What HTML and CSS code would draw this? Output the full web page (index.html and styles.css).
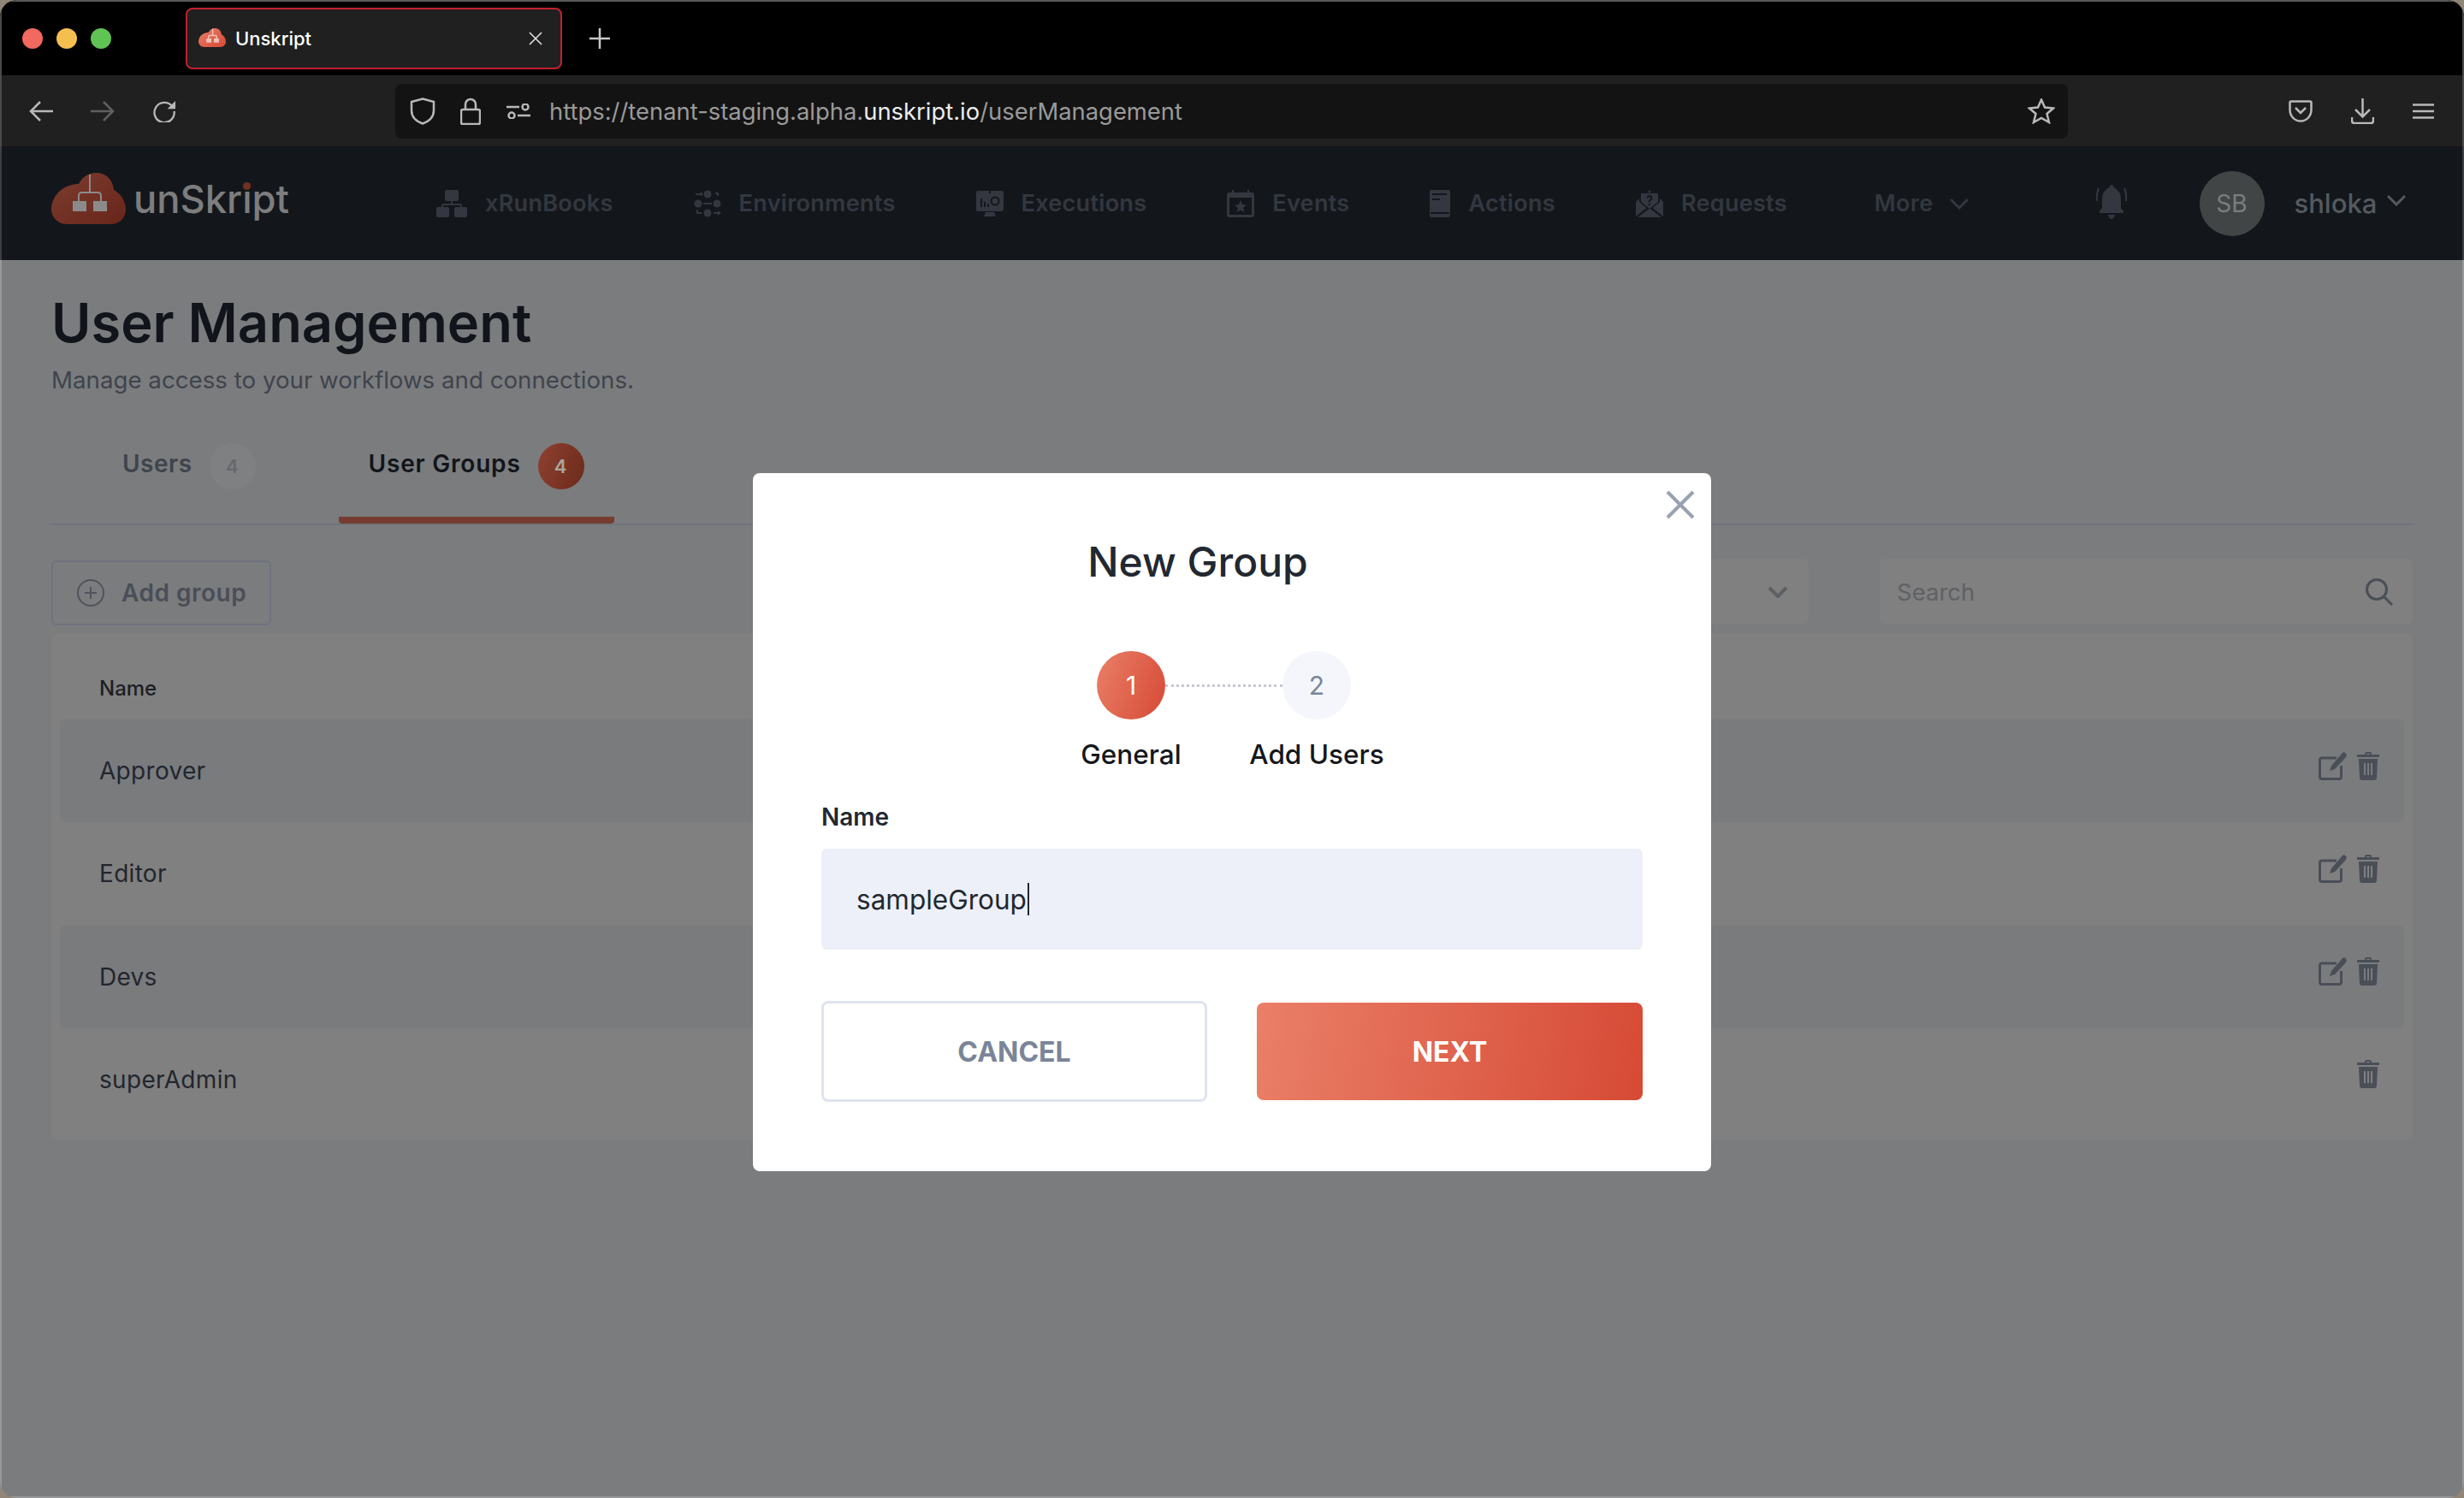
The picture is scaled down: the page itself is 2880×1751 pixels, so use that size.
FILE: index.html
```html
<!DOCTYPE html>
<html lang="en">

<head>
    <meta charset="UTF-8">
    <meta name="viewport" content="width=device-width, initial-scale=1.0">
    <title>User Management</title>
    <link rel="stylesheet" href="styles.css">
</head>

<body>
    <div class="window">
        <!-- browser tabs -->
        <div class="tabstrip">
            <div class="lights">
                <span class="light red"></span>
                <span class="light yellow"></span>
                <span class="light green"></span>
            </div>
            <div class="tab">
                <svg class="favicon" viewBox="0 0 87 60">
                    <defs>
                        <linearGradient id="favGrad" x1="0" y1="0" x2="1" y2="1">
                            <stop offset="0" stop-color="#ea7f68" />
                            <stop offset="1" stop-color="#d64a35" />
                        </linearGradient>
                    </defs>
                    <path fill="url(#favGrad)" d="M18 60C8 60 0 52 0 43C0 30 10 14 32 13C36 5 44 0 52 0C64 0 72 8 73 20C81 24 87 33 87 43C87 52 80 60 70 60Z" />
                    <path fill="none" stroke="#f3c4ba" stroke-width="4" d="M45 2V22M32 33V27Q32 23 36 23H54Q58 23 58 27V33" />
                    <path fill="#f3c4ba" d="M25 33H41V46H25ZM49 33H65V46H49Z" />
                </svg>
                <span class="tab-title">Unskript</span>
                <svg class="tab-close" viewBox="0 0 16 16">
                    <path d="M1 1L15 15M15 1L1 15" />
                </svg>
            </div>
            <svg class="new-tab" viewBox="0 0 24 24">
                <path d="M12 0V24M0 12H24" />
            </svg>
        </div>

        <!-- browser toolbar -->
        <div class="toolbar">
            <svg class="tool-icon" viewBox="0 0 28 24">
                <path d="M28 12H2M13 1L2 12L13 23" />
            </svg>
            <svg class="tool-icon tool-off" viewBox="0 0 28 24">
                <path d="M0 12H26M15 1L26 12L15 23" />
            </svg>
            <svg class="tool-icon" viewBox="0 0 28 28">
                <path d="M24 8A12.5 12.5 0 1 0 26.500 14" />
                <path class="solid" d="M28 1V11H18Z" />
            </svg>
            <div class="urlbar">
                <svg class="url-shield" viewBox="0 0 30 32">
                    <path d="M15 1.500L28 5V15C28 23 22 28 15 30.500C8 28 2 23 2 15V5Z" />
                </svg>
                <svg class="url-lock" viewBox="0 0 24 32">
                    <path d="M6 14V8A6 6 0 0 1 18 8V14M3 14H21Q23 14 23 16V29Q23 31 21 31H3Q1 31 1 29V16Q1 14 3 14Z" />
                </svg>
                <svg class="url-perm" viewBox="0 0 28 18">
                    <path d="M0 4H15M13 14H28" />
                    <circle cx="22" cy="4" r="3.500" />
                    <circle cx="6" cy="14" r="3.500" />
                </svg>
                <span class="url-text">https://tenant-staging.alpha.<b>unskript.io</b>/userManagement</span>
                <svg class="url-star" viewBox="0 0 32 30">
                    <path d="M16 1.500L20 10.500L30 11.500L22.500 18L25 28L16 23L7 28L9.500 18L2 11.500L12 10.500Z" />
                </svg>
            </div>
            <div class="tool-right">
                <svg class="pocket" viewBox="0 0 28 26">
                    <path d="M3 1.500H25Q26.500 1.500 26.500 3V11C26.500 19 21 24.500 14 24.500C7 24.500 1.500 19 1.500 11V3Q1.500 1.500 3 1.500ZM8 9L14 15L20 9" />
                </svg>
                <svg class="download" viewBox="0 0 27 30">
                    <path d="M13.500 0V21M5 13L13.500 21.500L22 13M1 22V26Q1 29 4 29H23Q26 29 26 26V22" />
                </svg>
                <svg class="burger" viewBox="0 0 25 18">
                    <path d="M0 1.500H25M0 9H25M0 16.500H25" />
                </svg>
            </div>
        </div>

        <!-- app nav -->
        <nav class="appnav">
            <div class="brand">
                <svg class="brand-mark" viewBox="0 0 87 60">
                    <defs>
                        <linearGradient id="brandGrad" x1="0" y1="0" x2="1" y2="1">
                            <stop offset="0" stop-color="#7c3c2e" />
                            <stop offset="1" stop-color="#68261a" />
                        </linearGradient>
                    </defs>
                    <path fill="url(#brandGrad)" d="M18 60C8 60 0 52 0 43C0 30 10 14 32 13C36 5 44 0 52 0C64 0 72 8 73 20C81 24 87 33 87 43C87 52 80 60 70 60Z" />
                    <path fill="none" stroke="#8b8b8b" stroke-width="2" d="M45 2V22M32 33V27Q32 23 36 23H54Q58 23 58 27V33" />
                    <path fill="#8b8b8b" d="M25 33H41V45H25ZM49 33H65V45H49Z" />
                </svg>
                <span class="brand-name">unSkr<span class="brand-i">i</span>pt</span>
            </div>
            <ul class="nav-items">
                <li class="nav-item">
                    <svg class="nav-icon" width="36" height="32" viewBox="0 0 36 32">
                        <rect x="10" y="0" width="16" height="13" rx="2" />
                        <rect x="0" y="20" width="15" height="12" rx="2" />
                        <rect x="21" y="20" width="15" height="12" rx="2" />
                        <path class="line" d="M18 13V17M7 20V19Q7 17 9 17H27Q29 17 29 19V20" />
                    </svg>
                    xRunBooks
                </li>
                <li class="nav-item">
                    <svg class="nav-icon" width="32" height="32" viewBox="0 0 32 32">
                        <circle cx="16" cy="5" r="4.500" />
                        <circle cx="5" cy="16" r="4.500" />
                        <circle cx="27" cy="16" r="4.500" />
                        <circle cx="16" cy="27" r="4.500" />
                        <path class="line" d="M11 16H21M2 5H9M25 4H28V7M4 23V27H9M23 27H30" />
                        <path d="M8 2L11 5L8 8ZM28 24L32 27L28 30Z" />
                    </svg>
                    Environments
                </li>
                <li class="nav-item">
                    <svg class="nav-icon" width="32" height="30" viewBox="0 0 32 30">
                        <path d="M2 0H15V3H17V0H30Q32 0 32 2V22Q32 24 30 24H2Q0 24 0 22V2Q0 0 2 0ZM11 25H21L23 30H9Z" />
                        <path class="dark" d="M5 9H7V19H5ZM9 13H11V19H9ZM13 15H15V19H13Z" />
                        <circle class="ring" cx="22" cy="12" r="4.500" />
                    </svg>
                    Executions
                </li>
                <li class="nav-item">
                    <svg class="nav-icon" width="32" height="32" viewBox="0 0 32 32">
                        <path d="M6 0H8V3H24V0H26V3H29Q32 3 32 6V29Q32 32 29 32H3Q0 32 0 29V6Q0 3 3 3H6ZM3 9V29H29V9Z" fill-rule="evenodd" />
                        <path d="M16 12L18 17L23 17.500L19 21L20.500 26L16 23.500L11.500 26L13 21L9 17.500L14 17Z" />
                    </svg>
                    Events
                </li>
                <li class="nav-item">
                    <svg class="nav-icon" width="24" height="32" viewBox="0 0 24 32">
                        <rect width="24" height="32" rx="2" />
                        <path class="cut" d="M3 5H20M3 11H12M1 27H23" />
                    </svg>
                    Actions
                </li>
                <li class="nav-item">
                    <svg class="nav-icon" width="32" height="32" viewBox="0 0 32 32">
                        <path d="M16 0L18 3H14ZM6 4H26V14L16 22L6 14ZM0 14L4 10V14L12.500 21L0 31ZM32 14L28 10V14L19.500 21L32 31ZM2 32L16 21.500L30 32Z" />
                        <path class="cut" d="M13.500 9.500Q14 7 16 7Q18.500 7 18.500 9.500Q18.500 11 16 12.500V14.500M16 16V18" />
                    </svg>
                    Requests
                </li>
                <li class="nav-item nav-more">
                    More
                    <svg class="chevron" viewBox="0 0 22 14">
                        <path d="M1 2L11 12L21 2" />
                    </svg>
                </li>
            </ul>
            <svg class="bell" viewBox="0 0 36 40">
                <path d="M18 0Q20 0 20.500 3Q29 7 29 17V27L32 31V33H4V31L7 27V17Q7 7 15.500 3Q16 0 18 0ZM14 35H22Q21 40 18 40Q15 40 14 35Z" />
                <path class="bell-ring" d="M3 4Q0 11 1 19M33 4Q36 11 35 19" />
            </svg>
            <div class="avatar">SB</div>
            <div class="username">
                shloka
                <svg class="chevron user-chevron" viewBox="0 0 22 14">
                    <path d="M1 2L11 12L21 2" />
                </svg>
            </div>
        </nav>

        <!-- page under the dialog -->
        <main class="page">
            <h1 class="page-title">User Management</h1>
            <p class="page-sub">Manage access to your workflows and connections.</p>

            <div class="tabs">
                <div class="page-tab">
                    <span class="tab-name">Users</span>
                    <span class="count">4</span>
                </div>
                <div class="page-tab active">
                    <span class="tab-name">User Groups</span>
                    <span class="count">4</span>
                </div>
            </div>

            <div class="actions">
                <button class="add-btn">
                    <svg class="add-icon" viewBox="0 0 32 32">
                        <circle cx="16" cy="16" r="15" />
                        <path d="M16 9V23M9 16H23" />
                    </svg>
                    Add group
                </button>
                <div class="filters">
                    <div class="select">
                        <svg class="select-chevron" viewBox="0 0 24 14">
                            <path d="M2 2L12 12L22 2" />
                        </svg>
                    </div>
                    <div class="search">
                        <span>Search</span>
                        <svg class="search-icon" viewBox="0 0 32 32">
                            <circle cx="13" cy="13" r="11.500" />
                            <path d="M21 21L31 31" />
                        </svg>
                    </div>
                </div>
            </div>

            <div class="group-table">
                <div class="table-head">Name</div>
                <div class="row">
                    <span>Approver</span>
                    <div class="row-icons">
                        <svg class="edit" viewBox="0 0 33 33">
                            <path class="edit-box" d="M21 7H4Q1.500 7 1.500 9.500V29Q1.500 31.500 4 31.500H24Q26.500 31.500 26.500 29V16" />
                            <path d="M30 0L33 3L32 6L19 20L13 22L15 16L28 1Z" />
                        </svg>
                        <svg class="trash" viewBox="0 0 26 33">
                            <path d="M9 3V2Q9 0 11 0H15Q17 0 17 2V3H26V6H0V3ZM11 3H15V2H11ZM2 8H24L23 30Q23 33 20 33H6Q3 33 3 30ZM8 13V27H10V13ZM12 13V27H14V13ZM16 13V27H18V13Z" fill-rule="evenodd" />
                        </svg>
                    </div>
                </div>
                <div class="row">
                    <span>Editor</span>
                    <div class="row-icons">
                        <svg class="edit" viewBox="0 0 33 33">
                            <path class="edit-box" d="M21 7H4Q1.500 7 1.500 9.500V29Q1.500 31.500 4 31.500H24Q26.500 31.500 26.500 29V16" />
                            <path d="M30 0L33 3L32 6L19 20L13 22L15 16L28 1Z" />
                        </svg>
                        <svg class="trash" viewBox="0 0 26 33">
                            <path d="M9 3V2Q9 0 11 0H15Q17 0 17 2V3H26V6H0V3ZM11 3H15V2H11ZM2 8H24L23 30Q23 33 20 33H6Q3 33 3 30ZM8 13V27H10V13ZM12 13V27H14V13ZM16 13V27H18V13Z" fill-rule="evenodd" />
                        </svg>
                    </div>
                </div>
                <div class="row">
                    <span>Devs</span>
                    <div class="row-icons">
                        <svg class="edit" viewBox="0 0 33 33">
                            <path class="edit-box" d="M21 7H4Q1.500 7 1.500 9.500V29Q1.500 31.500 4 31.500H24Q26.500 31.500 26.500 29V16" />
                            <path d="M30 0L33 3L32 6L19 20L13 22L15 16L28 1Z" />
                        </svg>
                        <svg class="trash" viewBox="0 0 26 33">
                            <path d="M9 3V2Q9 0 11 0H15Q17 0 17 2V3H26V6H0V3ZM11 3H15V2H11ZM2 8H24L23 30Q23 33 20 33H6Q3 33 3 30ZM8 13V27H10V13ZM12 13V27H14V13ZM16 13V27H18V13Z" fill-rule="evenodd" />
                        </svg>
                    </div>
                </div>
                <div class="row">
                    <span>superAdmin</span>
                    <div class="row-icons">
                        <svg class="trash" viewBox="0 0 26 33">
                            <path d="M9 3V2Q9 0 11 0H15Q17 0 17 2V3H26V6H0V3ZM11 3H15V2H11ZM2 8H24L23 30Q23 33 20 33H6Q3 33 3 30ZM8 13V27H10V13ZM12 13V27H14V13ZM16 13V27H18V13Z" fill-rule="evenodd" />
                        </svg>
                    </div>
                </div>
            </div>
        </main>

        <!-- new group dialog -->
        <div class="modal">
            <svg class="modal-close" viewBox="0 0 34 34">
                <path d="M2 2L32 32M32 2L2 32" />
            </svg>
            <h2 class="modal-title">New Group</h2>

            <div class="stepper">
                <div class="step current">
                    <span class="step-num">1</span>
                    <span class="step-label">General</span>
                </div>
                <div class="step-line"></div>
                <div class="step">
                    <span class="step-num">2</span>
                    <span class="step-label">Add Users</span>
                </div>
            </div>

            <label class="field-label">Name</label>
            <div class="field">sampleGroup<span class="caret"></span></div>

            <div class="modal-buttons">
                <button class="btn btn-cancel">CANCEL</button>
                <button class="btn btn-next">NEXT</button>
            </div>
        </div>
    </div>
</body>

</html>
```

FILE: styles.css
```css
* {
    box-sizing: border-box;
}

body {
    margin: 0;
    height: 1751px;
    background: #8f8677;
    font-family: Inter, "Noto Sans", sans-serif;
    overflow: hidden;
}

svg {
    display: block;
    flex: none;
}

.window {
    position: relative;
    height: 1751px;
    background: #7b7c7e;
    border-radius: 20px;
    overflow: hidden;
}

/* browser tabs */
.tabstrip {
    height: 88px;
    background: #000;
    border-top: 2px solid #5a5a5a;
    box-shadow: inset 2px 0 #4a4a4a, inset -2px 0 #4a4a4a;
    display: flex;
    align-items: center;
    padding-left: 26px;
}

.lights {
    display: flex;
    gap: 16px;
    width: 191px;
}

.light {
    width: 24px;
    height: 24px;
    border-radius: 50%;
}

.red {
    background: #f1695f;
}

.yellow {
    background: #f5bf4f;
}

.green {
    background: #5fc454;
}

.tab {
    width: 440px;
    height: 72px;
    background: #202020;
    border: 2px solid #c3202f;
    border-radius: 8px;
    display: flex;
    align-items: center;
    padding: 0 21px 0 13px;
}

.favicon {
    width: 32px;
    height: 22px;
    margin-top: -3px;
}

.tab-title {
    margin-left: 11px;
    color: #fff;
    font-size: 22px;
    font-weight: 500;
    flex: 1;
}

.tab-close {
    width: 16px;
    height: 16px;
    fill: none;
    stroke: #e6e6e6;
    stroke-width: 1.500;
}

.new-tab {
    width: 24px;
    height: 24px;
    margin-left: 32px;
    fill: none;
    stroke: #c8c8c8;
    stroke-width: 2.500;
}

/* browser toolbar */
.toolbar {
    height: 83px;
    background: #202020;
    box-shadow: inset 2px 0 #4a4a4a, inset -2px 0 #4a4a4a;
    display: flex;
    align-items: center;
    padding: 0 35px 0 34px;
}

.tool-icon {
    width: 28px;
    height: 26px;
    margin-right: 44px;
    fill: none;
    stroke: #b8b8b8;
    stroke-width: 2.500;
}

.tool-icon .solid {
    fill: #b8b8b8;
    stroke: none;
}

.tool-off {
    stroke: #5f5f5f;
}

.urlbar {
    width: 1955px;
    height: 64px;
    margin-left: 212px;
    background: #131313;
    border-radius: 8px;
    display: flex;
    align-items: center;
    padding: 0 15px 0 17px;
    color: #9a9a9a;
}

.urlbar svg {
    fill: none;
    stroke: #b8b8b8;
    stroke-width: 2.500;
}

.url-shield {
    width: 30px;
    height: 32px;
}

.url-lock {
    width: 24px;
    height: 32px;
    margin-left: 29px;
}

.url-perm {
    width: 28px;
    height: 18px;
    margin-left: 30px;
}

.url-text {
    margin-left: 22px;
    font-size: 27.400px;
    flex: 1;
}

.url-text b {
    color: #ececec;
    font-weight: 400;
}

.url-star {
    width: 32px;
    height: 30px;
}

.tool-right {
    margin-left: auto;
    display: flex;
    align-items: center;
    gap: 45px;
    fill: none;
    stroke: #b8b8b8;
    stroke-width: 2.500;
}

.pocket {
    width: 28px;
    height: 26px;
}

.download {
    width: 27px;
    height: 30px;
}

.burger {
    width: 25px;
    height: 18px;
}

/* app nav */
.appnav {
    height: 133px;
    background: #13171c;
    box-shadow: inset 2px 0 #3c3f43, inset -2px 0 #3c3f43;
    display: flex;
    align-items: center;
    padding-left: 60px;
}

.brand {
    display: flex;
    align-items: center;
    width: 450px;
    margin-top: -11px;
}

.brand-mark {
    width: 87px;
    height: 60px;
}

.brand-name {
    margin-left: 9px;
    color: #7d7d7d;
    font-size: 45.300px;
    font-weight: 500;
}

.brand-i {
    position: relative;
}

/* the i's dot is red in the logo */
.brand-i::after {
    content: "";
    position: absolute;
    top: 8px;
    left: 1px;
    width: 9px;
    height: 9px;
    border-radius: 50%;
    background: #74301f;
}

.nav-items {
    list-style: none;
    margin: 0;
    padding: 0;
    display: flex;
    align-items: center;
    gap: 94px;
}

.nav-item {
    display: flex;
    align-items: center;
    gap: 21px;
    color: #33373f;
    font-size: 27px;
    font-weight: 600;
    letter-spacing: 0.300px;
}

.nav-icon {
    fill: #343740;
}

.nav-icon .line {
    fill: none;
    stroke: #343740;
    stroke-width: 2;
}

.nav-icon .cut {
    fill: none;
    stroke: #13171c;
    stroke-width: 2;
}

.nav-icon .dark {
    fill: #13171c;
}

.nav-icon .ring {
    fill: none;
    stroke: #13171c;
    stroke-width: 2;
}

.nav-more {
    margin-left: 8px;
    gap: 19px;
}

.chevron {
    width: 22px;
    height: 14px;
    fill: none;
    stroke: #33373f;
    stroke-width: 3;
}

.bell {
    width: 36px;
    height: 40px;
    margin-left: 149px;
    margin-top: -3px;
    fill: #343740;
}

.bell-ring {
    fill: none;
    stroke: #343740;
    stroke-width: 2;
}

.avatar {
    width: 76px;
    height: 76px;
    margin-left: 85px;
    border-radius: 50%;
    background: #414546;
    color: #7a7d7f;
    font-size: 28px;
    display: flex;
    align-items: center;
    justify-content: center;
}

.username {
    margin-left: 35px;
    color: #555a5f;
    font-size: 31px;
    font-weight: 500;
    display: flex;
    align-items: flex-start;
    gap: 12px;
}

.user-chevron {
    margin-top: 8px;
    stroke: #555a5f;
}

/* page under the dialog */
.page {
    height: 1447px;
    padding: 0 60px;
    box-shadow: inset 2px 0 #97989a, inset -2px 0 #97989a, inset 0 -2px #97989a;
}

.page-title {
    margin: 0;
    padding-top: 34px;
    color: #11151b;
    font-size: 63.200px;
    line-height: 78px;
    font-weight: 600;
}

.page-sub {
    margin: 10px 0 0;
    color: #3f444c;
    font-size: 27.700px;
    line-height: 36px;
}

.tabs {
    margin-top: 53px;
    padding-left: 48px;
    border-bottom: 2px solid #70737b;
    display: flex;
    gap: 62px;
}

.page-tab {
    display: flex;
    align-items: center;
    gap: 20px;
    height: 97px;
    padding: 0 35px 38px;
    color: #3f444c;
    font-size: 28px;
    font-weight: 600;
    letter-spacing: 0.500px;
}

.page-tab.active {
    color: #11151b;
    border-bottom: 8px solid #763c2f;
    border-radius: 0 0 4px 4px;
    padding-bottom: 30px;
    letter-spacing: 0.800px;
}

.tab-name {
    margin-top: -6px;
}

.count {
    width: 54px;
    height: 54px;
    border-radius: 50%;
    background: #7f8081;
    color: #64686f;
    font-size: 22px;
    display: flex;
    align-items: center;
    justify-content: center;
}

.active .count {
    background: linear-gradient(110deg, #8f4130, #6b2a1b);
    color: #a9a5a0;
}

.actions {
    margin-top: 41px;
    height: 76px;
    display: flex;
    justify-content: space-between;
}

.add-btn {
    width: 257px;
    height: 76px;
    background: none;
    border: 2px solid #6e727b;
    border-radius: 6px;
    color: #4a4e57;
    font-family: inherit;
    font-size: 28px;
    font-weight: 600;
    letter-spacing: 0.500px;
    display: flex;
    align-items: center;
    gap: 20px;
    padding: 0 0 0 28px;
}

.add-icon {
    width: 32px;
    height: 32px;
    fill: none;
    stroke: #4f535c;
    stroke-width: 2;
}

.filters {
    display: flex;
    gap: 83px;
    margin-top: -2px;
}

.select {
    width: 400px;
    height: 77px;
    background: #808080;
    border-radius: 8px;
    display: flex;
    align-items: center;
    justify-content: flex-end;
    padding-right: 24px;
}

.select-chevron {
    width: 24px;
    height: 14px;
    fill: none;
    stroke: #5c5f63;
    stroke-width: 4;
}

.search {
    width: 623px;
    height: 77px;
    background: #808080;
    border-radius: 8px;
    display: flex;
    align-items: center;
    justify-content: space-between;
    padding: 0 23px 0 20px;
    color: #5f6165;
    font-size: 27.500px;
}

.search-icon {
    width: 32px;
    height: 32px;
    fill: none;
    stroke: #4a4e55;
    stroke-width: 3;
}

.group-table {
    margin-top: 9px;
    background: #808080;
    border-radius: 8px;
    padding: 0 10px 10px;
}

.table-head {
    height: 101px;
    padding: 45px 0 0 46px;
    color: #1b1f26;
    font-size: 24px;
    line-height: 40px;
    font-weight: 500;
}

.row {
    height: 120.250px;
    padding: 0 29px 0 46px;
    border-radius: 6px;
    display: flex;
    align-items: center;
    justify-content: space-between;
    color: #22262d;
    font-size: 28px;
    letter-spacing: 0.300px;
}

.row:nth-child(even) {
    background: #7a7b7d;
}

.row-icons {
    display: flex;
    gap: 12px;
    margin-top: -12px;
    fill: #4a4e57;
}

.edit {
    width: 33px;
    height: 33px;
}

.edit-box {
    fill: none;
    stroke: #4a4e57;
    stroke-width: 3;
}

.trash {
    width: 26px;
    height: 33px;
}

/* new group dialog */
.modal {
    position: absolute;
    left: 880px;
    top: 553px;
    width: 1120px;
    height: 816px;
    background: #fff;
    border-radius: 8px;
    padding: 0 80px;
}

.modal-close {
    position: absolute;
    top: 20px;
    right: 19px;
    width: 34px;
    height: 34px;
    fill: none;
    stroke: #97a1b2;
    stroke-width: 4;
}

.modal-title {
    width: 880px;
    margin: 0;
    padding-top: 76px;
    text-align: center;
    color: #222831;
    font-size: 48px;
    line-height: 56px;
    font-weight: 500;
}

.stepper {
    margin: 76px 0 0 322px;
    display: flex;
    align-items: flex-start;
}

.step {
    width: 156px;
    display: flex;
    flex-direction: column;
    align-items: center;
    gap: 21px;
    margin: 0 -38px;
}

.step-num {
    width: 80px;
    height: 80px;
    border-radius: 50%;
    background: #f4f6fb;
    color: #7a8599;
    font-size: 30px;
    display: flex;
    align-items: center;
    justify-content: center;
}

.current .step-num {
    background: linear-gradient(110deg, #ea7f68, #d64a35);
    color: #fff;
}

.step-label {
    color: #14171c;
    font-size: 31.500px;
    line-height: 40px;
    font-weight: 500;
    white-space: nowrap;
}

.step-line {
    width: 137px;
    margin-top: 39px;
    border-top: 3px dotted #c5c8d3;
}

.field-label {
    display: block;
    margin-top: 35px;
    color: #222831;
    font-size: 28px;
    line-height: 36px;
    font-weight: 600;
}

.field {
    height: 118px;
    margin-top: 19px;
    background: #edf0f8;
    border-radius: 6px;
    padding-left: 41px;
    display: flex;
    align-items: center;
    color: #222831;
    font-size: 31.500px;
}

.caret {
    width: 2px;
    height: 38px;
    margin-left: 1px;
    background: #222831;
}

.modal-buttons {
    margin-top: 60px;
    display: grid;
    grid-template-columns: 451px 451px;
    justify-content: space-between;
    align-items: center;
}

.btn {
    font-family: inherit;
    font-size: 32px;
    font-weight: 700;
    border-radius: 8px;
}

.btn-cancel {
    height: 118px;
    background: #fff;
    border: 3px solid #dfe3ee;
    color: #7a8599;
}

.btn-next {
    height: 114px;
    border: none;
    background: linear-gradient(100deg, #ea7f68, #d64a35);
    color: #fff;
}
```
